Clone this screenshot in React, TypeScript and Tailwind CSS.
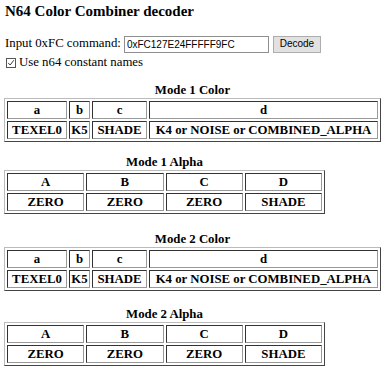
import React from 'react';

const colorCols = ['a', 'b', 'c', 'd'];
const colorVals = ['TEXEL0', 'K5', 'SHADE', 'K4 or NOISE or COMBINED_ALPHA'];
const alphaCols = ['A', 'B', 'C', 'D'];
const alphaVals = ['ZERO', 'ZERO', 'ZERO', 'SHADE'];

const cell =
  'border border-t-[#333] border-l-[#333] border-b-[#999] border-r-[#999] px-[1px] py-0 text-center font-bold leading-[16px]';

const tableBox =
  'border-separate border-spacing-[2px] border border-t-[#bbb] border-l-[#bbb] border-b-[#444] border-r-[#444]';

const ColorTable = ({ title }: { title: string }) => (
  <table className={`w-full ${tableBox}`}>
    <caption className="font-bold leading-[15px]">{title}</caption>
    <tbody>
      <tr>
        {colorCols.map((c, i) => (
          <td
            key={c}
            className={`${cell} ${i === 0 ? 'w-[60px]' : i === 1 ? 'w-[21px]' : i === 2 ? 'w-[55px]' : ''}`}
          >
            {c}
          </td>
        ))}
      </tr>
      <tr>
        {colorVals.map((v, i) => (
          <td key={i} className={cell}>
            {v}
          </td>
        ))}
      </tr>
    </tbody>
  </table>
);

const AlphaTable = ({ title }: { title: string }) => (
  <table className={`w-[321px] table-fixed ${tableBox}`}>
    <caption className="font-bold leading-[15px]">{title}</caption>
    <tbody>
      <tr>
        {alphaCols.map((c) => (
          <td key={c} className={cell}>
            {c}
          </td>
        ))}
      </tr>
      <tr>
        {alphaVals.map((v, i) => (
          <td key={i} className={cell}>
            {v}
          </td>
        ))}
      </tr>
    </tbody>
  </table>
);

export default function App() {
  return (
    <div className="px-[4px] pt-[3px] text-[12.8px] text-black bg-white min-h-screen [font-family:'Liberation_Serif',serif]">
      <h3 className="text-[15px] font-bold leading-[17px] pl-[1px]">N64 Color Combiner decoder</h3>

      <div className="mt-[15px] flex items-center pl-[1px] h-[18px]">
        <span>Input 0xFC command:</span>
        <input
          readOnly
          value="0xFC127E24FFFFF9FC"
          className="ml-[3px] w-[145px] h-[17px] border border-[#8f8f8f] px-[2px] text-[10px] [font-family:'Liberation_Sans',sans-serif] outline-none"
        />
        <button className="ml-[4px] w-[48px] h-[17px] bg-[#e1e1e1] border border-[#adadad] text-[10px] [font-family:'Liberation_Sans',sans-serif] leading-none">
          Decode
        </button>
      </div>

      <label className="flex items-center h-[15px] mt-[2px] pl-[2px]">
        <span className="w-[10px] h-[10px] border border-[#555] flex items-center justify-center mr-[3px]">
          <svg viewBox="0 0 10 10" className="w-[8px] h-[8px]">
            <path d="M1.5 5 L4 7.5 L8.5 1.5" fill="none" stroke="#333" strokeWidth="1.2" />
          </svg>
        </span>
        <span>Use n64 constant names</span>
      </label>

      <div className="mt-[13px]">
        <ColorTable title="Mode 1 Color" />
      </div>
      <div className="mt-[13px]">
        <AlphaTable title="Mode 1 Alpha" />
      </div>
      <div className="mt-[18px]">
        <ColorTable title="Mode 2 Color" />
      </div>
      <div className="mt-[16px]">
        <AlphaTable title="Mode 2 Alpha" />
      </div>
    </div>
  );
}
